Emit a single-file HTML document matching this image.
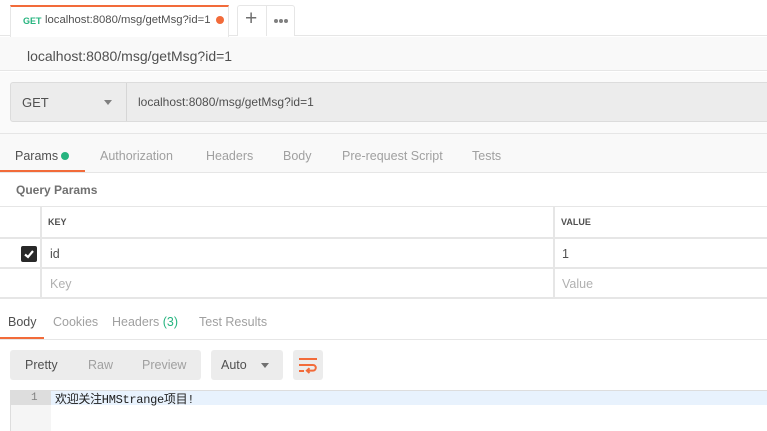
<!DOCTYPE html>
<html><head><meta charset="utf-8"><style>
*{margin:0;padding:0;box-sizing:border-box}
body{width:767px;height:431px;overflow:hidden;background:#fff;font-family:"Liberation Sans","Noto Sans CJK SC",sans-serif;position:relative;color:#505050}
.a{position:absolute}
.d{position:absolute;width:4px;height:4px;border-radius:50%;background:#808080;top:19px}
</style></head><body>
<div class="a" style="left:0;top:0;width:767px;height:36px;background:#fff;border-bottom:1px solid #e6e6e6"></div>
<div class="a" style="left:10px;top:5px;width:219px;height:32px;background:#fff;border-top:2px solid #f26b3a;border-left:1px solid #e6e6e6;border-right:1px solid #e6e6e6"></div>
<div class="a" style="left:23px;top:16px;font-size:9px;font-weight:bold;color:#26b47f">GET</div>
<div class="a" style="left:45px;top:14px;font-size:11.3px;color:#505050">localhost:8080/msg/getMsg?id=1</div>
<div class="a" style="left:216px;top:16px;width:8px;height:8px;border-radius:50%;background:#f26b3a"></div>
<div class="a" style="left:237px;top:5px;width:58px;height:31px;border:1px solid #e6e6e6;border-bottom:none;border-radius:3px 3px 0 0;background:#fff"></div>
<div class="a" style="left:266px;top:6px;width:1px;height:30px;background:#e6e6e6"></div>
<div class="a" style="left:245px;top:7px;font-size:21px;color:#707070">+</div>
<div class="d" style="left:274px"></div><div class="d" style="left:279px"></div><div class="d" style="left:284px"></div>
<div class="a" style="left:0;top:37px;width:767px;height:34px;background:#f9f9f9;border-bottom:1px solid #e6e6e6"></div>
<div class="a" style="left:27px;top:48px;font-size:14px;color:#505050">localhost:8080/msg/getMsg?id=1</div>
<div class="a" style="left:0;top:72px;width:767px;height:61px;background:#fafafa"></div>
<div class="a" style="left:10px;top:82px;width:760px;height:40px;background:#ececec;border:1px solid #dcdcdc;border-radius:3px"></div>
<div class="a" style="left:126px;top:83px;width:1px;height:38px;background:#d6d6d6"></div>
<div class="a" style="left:22px;top:95px;font-size:13px;color:#505050">GET</div>
<div class="a" style="left:104px;top:100px;width:0;height:0;border-left:4px solid transparent;border-right:4px solid transparent;border-top:5px solid #808080"></div>
<div class="a" style="left:138px;top:95px;font-size:12px;color:#505050">localhost:8080/msg/getMsg?id=1</div>
<div class="a" style="left:0;top:133px;width:767px;height:40px;background:#f9f9f9;border-top:1px solid #e6e6e6;border-bottom:1px solid #e6e6e6"></div>
<div class="a" style="left:15px;top:149px;font-size:12.5px;color:#505050">Params</div>
<div class="a" style="left:61px;top:152px;width:8px;height:8px;border-radius:50%;background:#26b47f"></div>
<div class="a" style="left:0;top:170px;width:85px;height:2px;background:#f26b3a"></div>
<div class="a" style="left:100px;top:149px;font-size:12.5px;color:#a0a0a0">Authorization</div>
<div class="a" style="left:206px;top:149px;font-size:12.5px;color:#a0a0a0">Headers</div>
<div class="a" style="left:283px;top:149px;font-size:12.5px;color:#a0a0a0">Body</div>
<div class="a" style="left:342px;top:149px;font-size:12.5px;color:#a0a0a0">Pre-request Script</div>
<div class="a" style="left:472px;top:149px;font-size:12.5px;color:#a0a0a0">Tests</div>
<div class="a" style="left:16px;top:183px;font-size:12px;font-weight:bold;color:#707070">Query Params</div>
<div class="a" style="left:0;top:206px;width:767px;height:93px;border-top:1px solid #e6e6e6;border-bottom:2px solid #e6e6e6"></div>
<div class="a" style="left:0;top:237px;width:767px;height:2px;background:#e6e6e6"></div>
<div class="a" style="left:0;top:267px;width:767px;height:2px;background:#e6e6e6"></div>
<div class="a" style="left:40px;top:207px;width:2px;height:91px;background:#e6e6e6"></div>
<div class="a" style="left:553px;top:207px;width:2px;height:91px;background:#e6e6e6"></div>
<div class="a" style="left:48px;top:217px;font-size:9px;font-weight:bold;color:#505050">KEY</div>
<div class="a" style="left:561px;top:217px;font-size:9px;font-weight:bold;color:#505050">VALUE</div>
<div class="a" style="left:21px;top:246px;width:16px;height:16px;background:#282828;border-radius:2px"></div>
<svg class="a" style="left:21px;top:246px" width="16" height="16"><path d="M4 8.5 L7 11 L12 5" stroke="#fff" stroke-width="2.2" fill="none"/></svg>
<div class="a" style="left:50px;top:247px;font-size:12.5px;color:#505050">id</div>
<div class="a" style="left:562px;top:247px;font-size:12.5px;color:#505050">1</div>
<div class="a" style="left:50px;top:277px;font-size:12.5px;color:#b0b0b0">Key</div>
<div class="a" style="left:562px;top:277px;font-size:12.5px;color:#b0b0b0">Value</div>
<div class="a" style="left:0;top:339px;width:767px;height:1px;background:#e6e6e6"></div>
<div class="a" style="left:8px;top:315px;font-size:12.5px;color:#505050">Body</div>
<div class="a" style="left:0;top:337px;width:44px;height:2px;background:#f26b3a"></div>
<div class="a" style="left:53px;top:315px;font-size:12.5px;color:#a0a0a0">Cookies</div>
<div class="a" style="left:112px;top:315px;font-size:12.5px;color:#a0a0a0">Headers <span style="color:#26b47f">(3)</span></div>
<div class="a" style="left:199px;top:315px;font-size:12.5px;color:#a0a0a0">Test Results</div>
<div class="a" style="left:10px;top:350px;width:191px;height:30px;background:#ececec;border-radius:3px"></div>
<div class="a" style="left:25px;top:358px;font-size:12.5px;color:#505050">Pretty</div>
<div class="a" style="left:88px;top:358px;font-size:12.5px;color:#a0a0a0">Raw</div>
<div class="a" style="left:142px;top:358px;font-size:12.5px;color:#a0a0a0">Preview</div>
<div class="a" style="left:211px;top:350px;width:72px;height:30px;background:#ececec;border-radius:3px"></div>
<div class="a" style="left:221px;top:358px;font-size:12.5px;color:#505050">Auto</div>
<div class="a" style="left:261px;top:363px;width:0;height:0;border-left:4px solid transparent;border-right:4px solid transparent;border-top:5px solid #707070"></div>
<div class="a" style="left:293px;top:350px;width:30px;height:30px;background:#ececec;border-radius:3px"></div>
<svg class="a" style="left:293px;top:350px" width="30" height="30"><g stroke="#f26b3a" stroke-width="2" fill="none"><path d="M6 9H24"/><path d="M6 15H20a2.8 2.8 0 0 1 0 5.6H14"/><path d="M16.5 18.2l-2.6 2.4 2.6 2.4"/><path d="M6 21H11"/></g></svg>
<div class="a" style="left:10px;top:390px;width:757px;height:41px;border-left:1px solid #ddd;border-top:1px solid #ddd;background:#fff"></div>
<div class="a" style="left:11px;top:391px;width:40px;height:40px;background:#f5f5f5"></div>
<div class="a" style="left:11px;top:391px;width:40px;height:14px;background:#ddd"></div>
<div class="a" style="left:51px;top:391px;width:716px;height:14px;background:#e8f2fd"></div>
<div class="a" style="left:31px;top:392px;font-size:11px;color:#808080;font-family:'Liberation Mono',monospace">1</div>
<div class="a" style="left:55px;top:390px;font-size:12px;color:#202020;font-family:'Liberation Mono','Noto Sans CJK SC',monospace;letter-spacing:-0.3px">欢迎关注HMStrange项目!</div>
</body></html>
